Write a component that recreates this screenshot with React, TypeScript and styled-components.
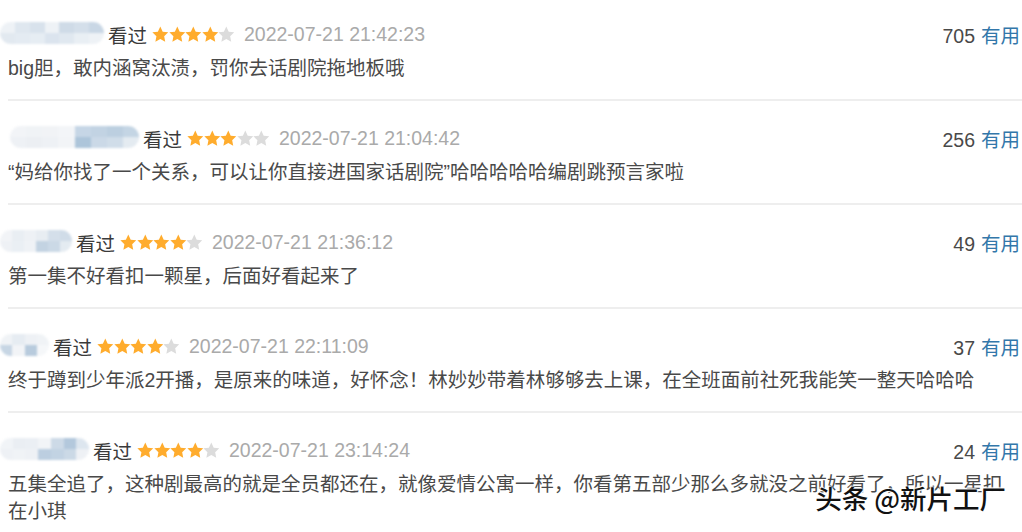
import React from 'react';
import styled, { createGlobalStyle } from 'styled-components';

const GlobalStyle = createGlobalStyle`
  html, body {
    margin: 0;
    padding: 0;
    background: #fff;
  }
  body {
    font-family: "Liberation Sans", "Noto Sans CJK SC", sans-serif;
    overflow: hidden;
  }
`;

interface Review {
  user: { left: number; width: number; tones: string[] };
  stars: number;
  time: string;
  votes: number;
  text: string;
}

const reviews: Review[] = [
  {
    user: {
      left: 0,
      width: 104,
      tones: ['#eef2f6', '#e2e9f0', '#dfe7ef', '#e4ebf2', '#d8e2ec', '#e6edf3', '#eef2f6', '#dbe4ee', '#cfdbe7', '#e0e8f0', '#d4dfea', '#e9eff4', '#c9d7e5', '#eef2f6'],
    },
    stars: 4,
    time: '2022-07-21 21:42:23',
    votes: 705,
    text: 'big胆，敢内涵窝汰渍，罚你去话剧院拖地板哦',
  },
  {
    user: {
      left: 10,
      width: 129,
      tones: ['#f2f4f7', '#eef1f5', '#f0f3f6', '#eceff3', '#f1f3f6', '#eef1f5', '#f3f5f8', '#f2f4f7', '#c6d6e6', '#adc5da', '#c2d3e3', '#cbd9e7', '#bccfe0', '#d0dde9', '#c4d5e4', '#e4ebf1'],
    },
    stars: 3,
    time: '2022-07-21 21:04:42',
    votes: 256,
    text: '“妈给你找了一个关系，可以让你直接进国家话剧院”哈哈哈哈哈编剧跳预言家啦',
  },
  {
    user: {
      left: 0,
      width: 72,
      tones: ['#f2f4f7', '#eef1f5', '#e9eef3', '#eaeff4', '#eef1f5', '#eff2f6', '#e8edf2', '#c3d3e2', '#d4dfea', '#cbd9e6', '#d0dce8', '#e4ebf1'],
    },
    stars: 4,
    time: '2022-07-21 21:36:12',
    votes: 49,
    text: '第一集不好看扣一颗星，后面好看起来了',
  },
  {
    user: {
      left: 0,
      width: 49,
      tones: ['#f0f3f6', '#c7d6e4', '#e6ecf2', '#f2f4f7', '#eef1f5', '#b8cbdd', '#f0f3f6', '#f5f7f9'],
    },
    stars: 4,
    time: '2022-07-21 22:11:09',
    votes: 37,
    text: '终于蹲到少年派2开播，是原来的味道，好怀念！林妙妙带着林够够去上课，在全班面前社死我能笑一整天哈哈哈',
  },
  {
    user: {
      left: 0,
      width: 89,
      tones: ['#f1f4f7', '#eef1f5', '#eaeef3', '#f0f3f6', '#ebeff4', '#eef1f5', '#f2f4f7', '#bccee0', '#cddae7', '#c2d3e3', '#b3c8dc', '#cbd9e6', '#dde6ef', '#eef1f5'],
    },
    stars: 4,
    time: '2022-07-21 23:14:24',
    votes: 24,
    text: '五集全追了，这种剧最高的就是全员都还在，就像爱情公寓一样，你看第五部少那么多就没之前好看了，所以一星扣在小琪',
  },
];

const Page = styled.div`
  position: relative;
  width: 1022px;
  height: 532px;
  overflow: hidden;
  padding-left: 8px;
  box-sizing: border-box;
`;

const Item = styled.div`
  padding: 22px 2px 17px 0;
  border-bottom: 2px solid #eeeeee;

  &:first-child {
    padding-top: 19px;
  }
  &:last-child {
    border-bottom: none;
  }
`;

const Header = styled.div`
  display: flex;
  align-items: center;
  height: 30px;
`;

const Mosaic = styled.div<{ $left: number; $width: number }>`
  display: grid;
  grid-auto-flow: column;
  grid-template-rows: 11px 11px;
  width: ${({ $width }) => $width}px;
  margin-left: ${({ $left }) => $left - 8}px;
  margin-right: 4px;
  border-radius: 12px;
  overflow: hidden;
  filter: blur(1.2px);
  align-self: flex-start;
  margin-top: 3px;
`;

const Cell = styled.span<{ $tone: string }>`
  background: ${({ $tone }) => $tone};
`;

const Seen = styled.span`
  font-size: 19.5px;
  color: #3a3a3a;
  margin-right: 5px;
`;

const Stars = styled.span`
  display: inline-flex;
  margin-right: 9px;
`;

const Time = styled.span`
  font-size: 19.5px;
  color: #aaaaaa;
`;

const Votes = styled.span`
  margin-left: auto;
  font-size: 19.5px;
  color: #494949;
`;

const Useful = styled.span`
  color: #3377aa;
  margin-left: 6px;
`;

const Comment = styled.p`
  margin: 6px 0 0;
  font-size: 19.5px;
  line-height: 27px;
  color: #494949;
`;

const Watermark = styled.div`
  position: absolute;
  right: 16px;
  top: 481px;
  font-family: "Noto Sans CJK SC", sans-serif;
  font-size: 26.5px;
  font-weight: 500;
  line-height: 34px;
  color: #111;
  text-shadow: 0 0 2px #fff, 0 0 2px #fff, 1px 1px 1px #fff, -1px -1px 1px #fff;
  white-space: nowrap;
`;

function Star({ on }: { on: boolean }) {
  return (
    <svg width="16.6" height="17" viewBox="0 0 24 24">
      <path
        d="M12 .6l3.5 7.3 8 1-5.9 5.5 1.5 8.1L12 18.6l-7.1 3.9 1.5-8.1L.5 8.9l8-1z"
        fill={on ? '#ffac2d' : '#dcdcdc'}
      />
    </svg>
  );
}

export default function App() {
  return (
    <>
      <GlobalStyle />
      <Page>
        {reviews.map((r, i) => (
          <Item key={i}>
            <Header>
              <Mosaic $left={r.user.left} $width={r.user.width}>
                {r.user.tones.map((t, j) => (
                  <Cell key={j} $tone={t} />
                ))}
              </Mosaic>
              <Seen>看过</Seen>
              <Stars>
                {[0, 1, 2, 3, 4].map((n) => (
                  <Star key={n} on={n < r.stars} />
                ))}
              </Stars>
              <Time>{r.time}</Time>
              <Votes>
                {r.votes}
                <Useful>有用</Useful>
              </Votes>
            </Header>
            <Comment>{r.text}</Comment>
          </Item>
        ))}
        <Watermark>头条 @新片工厂</Watermark>
      </Page>
    </>
  );
}
